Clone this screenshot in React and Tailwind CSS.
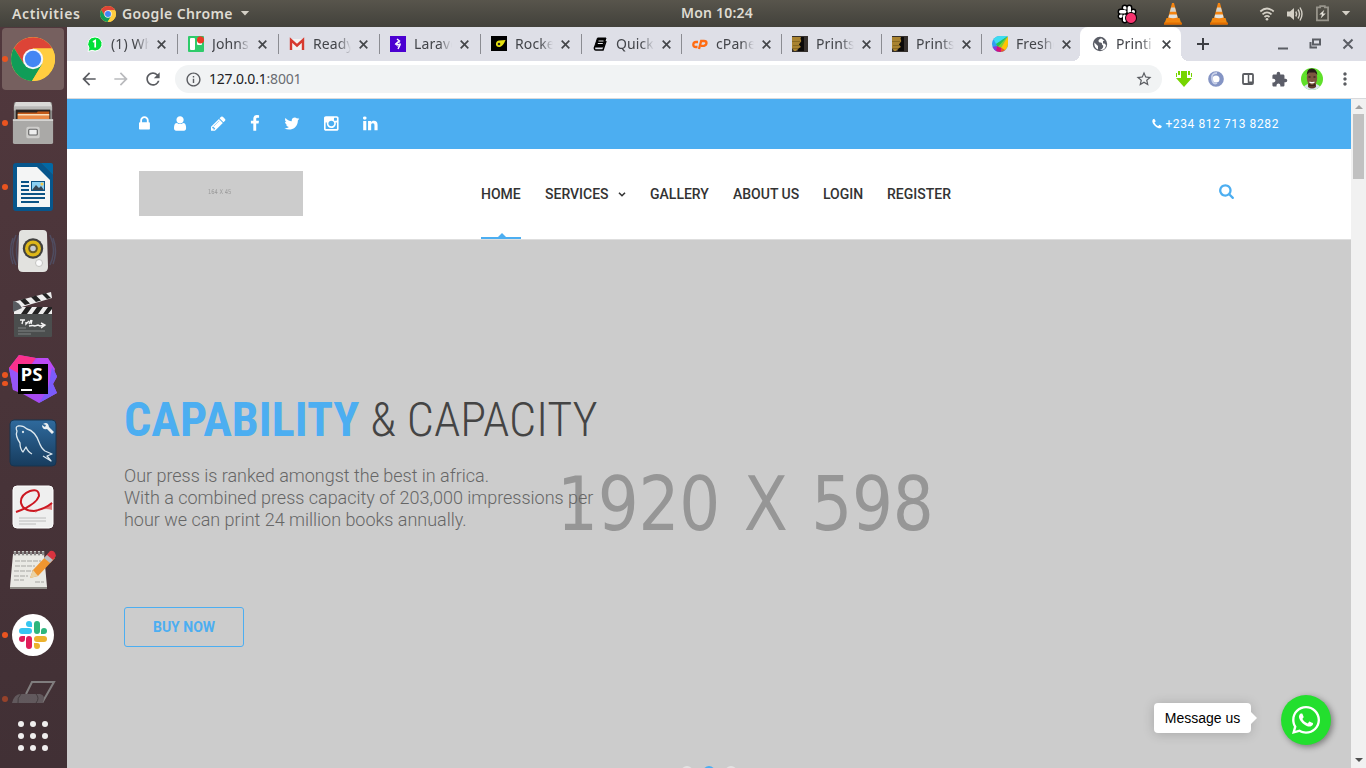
import React from "react";
import { FaWhatsapp } from "react-icons/fa";
import { MdArrowBack, MdArrowForward, MdRefresh, MdInfoOutline, MdStarBorder, MdExtension, MdMoreVert } from "react-icons/md";

const FA = {
  lock: ["0 0 1152 1792", "M320 768h512v-192q0-106-75-181t-181-75-181 75-75 181v192zM1152 864v576q0 40-28 68t-68 28h-960q-40 0-68-28t-28-68v-576q0-40 28-68t68-28h32v-192q0-184 132-316t316-132 316 132 132 316v192h32q40 0 68 28t28 68z"],
  user: ["0 0 1280 1792", "M1280 1399q0 109-62.500 187t-150.500 78h-854q-88 0-150.500-78t-62.500-187q0-85 8.500-160.500t31.500-152 58.500-131 94-89 134.500-34.500q131 128 313 128t313-128q76 0 134.500 34.500t94 89 58.500 131 31.500 152 8.500 160.500zM1024 512q0 159-112.500 271.500t-271.500 112.500-271.500-112.500-112.500-271.500 112.500-271.500 271.500-112.500 271.500 112.500 112.500 271.500z"],
  pencil: ["0 0 1536 1792", "M363 1536l91-91-235-235-91 91v107h128v128h107zM886 608q0-22-22-22-10 0-17 7l-542 542q-7 7-7 17 0 22 22 22 10 0 17-7l542-542q7-7 7-17zM832 416l416 416-832 832h-416v-416zM1515 512q0 53-37 90l-166 166-416-416 166-165q36-38 90-38 53 0 91 38l235 234q37 39 37 91z"],
  facebook: ["384 0 1024 1792", "M1343 12v264h-157q-86 0-116 36t-30 108v189h293l-39 296h-254v759h-306v-759h-255v-296h255v-218q0-186 104-288.5t277-102.5q147 0 228 12z"],
  twitter: ["64 0 1664 1792", "M1684 408q-67 98-162 167 1 14 1 42 0 130-38 259.5t-115.5 248.5-184.5 210.5-258 146-323 54.5q-271 0-496-145 35 4 78 4 225 0 401-138-105-2-188-64.5t-114-159.5q33 5 61 5 43 0 85-11-112-23-185.5-111.5t-73.5-205.5v-4q68 38 146 41-66-44-105-115t-39-154q0-88 44-163 121 149 294.5 238.5t371.5 99.5q-8-38-8-74 0-134 94.5-228.5t228.5-94.5q140 0 236 102 109-21 205-78-37 115-142 178 93-10 186-50z"],
  instagram: ["128 0 1536 1792", "M1490 1426v-648h-135q20 63 20 131 0 126-64 232.5t-174 168.5-240 62q-197 0-337-135.5t-140-327.5q0-68 20-131h-141v648q0 26 17.5 43.5t43.5 17.5h1069q25 0 43-17.5t18-43.5zm-284-533q0-124-90.5-211.5t-218.5-87.5q-127 0-217.5 87.5t-90.5 211.5 90.5 211.5 217.5 87.5q128 0 218.5-87.5t90.5-211.5zm284-360v-165q0-28-20-48.5t-49-20.5h-174q-29 0-49 20.5t-20 48.5v165q0 29 20 49t49 20h174q29 0 49-20t20-49zm174-208v1142q0 81-58 139t-139 58h-1142q-81 0-139-58t-58-139v-1142q0-81 58-139t139-58h1142q81 0 139 58t58 139z"],
  linkedin: ["128 0 1536 1792", "M477 625v991h-330v-991h330zm21-306q1 73-50.5 122t-135.5 49h-2q-82 0-132-49t-50-122q0-74 51.5-122.5t134.5-48.5 133 48.5 51 122.5zm1166 729v568h-329v-530q0-105-40.5-164.5t-126.5-59.5q-63 0-105.5 34.5t-63.5 85.5q-11 30-11 81v553h-329q2-399 2-647t-1-296l-1-48h329v144h-2q20-32 41-56t56.5-52 87-43.5 114.5-15.5q171 0 275 113.5t104 332.5z"],
  search: ["64 0 1664 1792", "M1216 832q0-185-131.5-316.5t-316.5-131.5-316.5 131.5-131.5 316.5 131.5 316.5 316.5 131.5 316.5-131.5 131.5-316.5zm512 832q0 52-38 90t-90 38q-54 0-90-38l-343-342q-179 124-399 124-143 0-273.5-55.5t-225-150-150-225-55.5-273.5 55.5-273.5 150-225 225-150 273.5-55.5 273.5 55.5 225 150 150 225 55.5 273.5q0 220-124 399l343 343q37 37 37 90z"],
  phone: ["192 0 1408 1792", "M1600 1240q0 27-10 70.5t-21 68.5q-21 50-122 106-94 51-186 51-27 0-52.5-3.5t-57.5-12.5-47.5-14.5-55.5-20.5-49-18q-98-35-175-83-128-79-264.5-215.5t-215.5-264.5q-48-77-83-175-3-9-18-49t-20.5-55.5-14.5-47.5-12.5-57.5-3.5-52.5q0-92 51-186 56-101 106-122 25-11 68.5-21t70.5-10q14 0 21 3 18 6 53 76 11 19 30 54t35 63.5 31 53.5q3 4 17.5 25t21.5 35.5 7 28.5q0 20-28.5 50t-62 55-62 53-28.5 46q0 9 5 22.5t8.5 20.5 14 24 11.5 19q76 137 174 235t235 174q2 1 19 11.5t24 14 20.5 8.5 22.5 5q18 0 46-28.5t53-62 55-62 50-28.5q14 0 28.5 7t35.5 21.5 25 17.5q25 15 53.5 31t63.5 35 54 30q70 35 76 53 3 7 3 21z"],
};

function Fa({ name, className }) {
  const [box, d] = FA[name];
  return (
    <svg viewBox={box} fill="currentColor" overflow="visible" className={className}>
      <path d={d} />
    </svg>
  );
}

function Chrome({ className }) {
  return (
    <svg viewBox="0 0 44 44" className={className}>
      <circle cx="22" cy="22" r="22" fill="#ffcd40" />
      <path d="M3 11A22 22 0 0 1 41.2 11.5H22L13 27Z" fill="#dd4437" />
      <path d="M3 11A22 22 0 0 0 21 44L31 27.5 13 27Z" fill="#109d58" />
      <path d="M31 27.5 21 44a22 22 0 0 0 20.3-32.4H22Z" fill="#ffcd40" />
      <circle cx="22" cy="22" r="10.2" fill="#f4f6fb" />
      <circle cx="22" cy="22" r="8.2" fill="#4486f4" />
    </svg>
  );
}

function Cone() {
  return (
    <svg viewBox="0 0 20 22" className="h-[22px] w-5">
      <path d="M3.5 15h13l2 6.5H1z" fill="#f08a10" />
      <path d="M1 19.5h18v2H1z" fill="#e06c00" />
      <path d="M9 0h2l4.5 17q-5.500 2.500-11 0z" fill="#f58410" />
      <path d="M8.100 4.500h3.800l1.200 4.200H6.900z" fill="#d4d4ce" />
      <path d="M6.200 11.500h7.600l.8 3q-4.600 1.600-9.200 0z" fill="#e2e2de" />
    </svg>
  );
}

function SlackMark({ className, mono }) {
  const c = mono ? ["#fff", "#fff", "#fff", "#fff"] : ["#36c5f0", "#2eb67d", "#ecb22e", "#e01e5a"];
  return (
    <svg viewBox="0 0 28 28" overflow="visible" className={className}>
      {mono && (
        <g fill="#000" stroke="#000" strokeWidth="5">
          <rect x="0" y="7" width="13" height="6" rx="3" /><path d="M13 6h-3a3 3 0 1 1 3-3z" /><rect x="15" y="0" width="6" height="13" rx="3" /><path d="M22 13v-3a3 3 0 1 1 3 3z" />
          <rect x="15" y="15" width="13" height="6" rx="3" /><rect x="7" y="15" width="6" height="13" rx="3" /><path d="M6 15v3a3 3 0 1 1-3-3z" />
        </g>
      )}
      <g fill={c[0]}><rect x="0" y="7" width="13" height="6" rx="3" /><path d="M13 6h-3a3 3 0 1 1 3-3z" /></g>
      <g fill={c[1]}><rect x="15" y="0" width="6" height="13" rx="3" /><path d="M22 13v-3a3 3 0 1 1 3 3z" /></g>
      <g fill={c[2]}><rect x="15" y="15" width="13" height="6" rx="3" /><path d="M15 22h3a3 3 0 1 1-3 3z" /></g>
      <g fill={c[3]}><rect x="7" y="15" width="6" height="13" rx="3" /><path d="M6 15v3a3 3 0 1 1-3-3z" /></g>
    </svg>
  );
}

function TopBar() {
  return (
    <header className="grid h-[27px] shrink-0 grid-cols-[1fr_auto_1fr] items-center bg-linear-to-b from-[#58554c] to-[#42413b] font-['Noto_Sans',sans-serif] text-[14px] font-semibold text-[#dfdbd2]">
      <div className="flex h-full items-center">
        <span className="ml-3 w-[88px] whitespace-nowrap tracking-[0.600px]">Activities</span>
        <Chrome className="mr-1.5 size-4" />
        <span className="w-[114px] whitespace-nowrap tracking-[0.380px]">Google Chrome</span>
        <svg viewBox="0 0 10 6" className="ml-1 h-[5px] w-[10px]"><path d="M0 0h10L5 5.500z" fill="#d4d0c6" /></svg>
      </div>
      <span className="translate-x-[34px] -translate-y-px whitespace-nowrap tracking-[0.200px]">Mon 10:24</span>
      <div className="flex h-full items-center justify-end">
        <div className="relative mr-[26px] flex size-5 items-center justify-center">
          <SlackMark mono className="size-[16px]" />
          <i className="absolute right-0 bottom-0 size-3 rounded-full border border-black bg-[#f8336f]" />
        </div>
        <Cone />
        <span className="w-[26px]" />
        <Cone />
        <svg viewBox="0 0 16 16" className="ml-[30px] size-4" fill="none" stroke="#d4d0c6" strokeWidth="1.700">
          <path d="M1.300 5.500q6.700-6 13.400 0" /><path d="M3.500 8.300q4.500-4 9 0" /><path d="M5.500 11q2.500-2.300 5 0" /><circle cx="8" cy="13.300" r="1.300" fill="#d4d0c6" stroke="none" />
        </svg>
        <svg viewBox="0 0 16 16" className="ml-3 size-4" fill="none" stroke="#d4d0c6" strokeWidth="1.400">
          <path d="M0 5.500h3L7 2v12l-4-3.500H0z" fill="#d4d0c6" stroke="none" /><path d="M8.800 5.500q1.600 2.500 0 5" /><path d="M11 3.500q3 4.500 0 9" /><path d="M13 1.500q4 6.500 0 13" />
        </svg>
        <svg viewBox="0 0 14 18" className="ml-[13px] h-[17px] w-[13px]" fill="none" stroke="#98958c" strokeWidth="1.900">
          <path d="M4.500 2.500V1h5v1.500H13v14H1v-14z" /><path d="M9 5 3.500 10h3l-1.500 4.500 5.500-5.500h-3z" fill="#e3e0d8" stroke="none" />
        </svg>
        <svg viewBox="0 0 10 6" className="mr-[15px] ml-[12px] h-[5px] w-[10px]"><path d="M0 0h10L5 5.500z" fill="#d4d0c6" /></svg>
      </div>
    </header>
  );
}

const Files = () => (
  <svg viewBox="0 0 44 46" className="size-11">
    <rect x="2" y="1" width="40" height="43" rx="2" fill="#8d8c8a" />
    <path d="M4 1h36l2 5H2z" fill="#dad9d7" /><path d="M2 6h40v4H2z" fill="#b9b8b6" />
    <rect x="4" y="9" width="36" height="10" fill="#2c2522" />
    <path d="M6 12h20l1-1h12v8H6z" fill="#c45a18" /><path d="M6 13.500h33v2H6z" fill="#fbe0bd" /><path d="M6 15.500h33V19H6z" fill="#ec8a45" />
    <path d="M1 19h42v24q0 2-2 2H3q-2 0-2-2z" fill="#aaa9a7" /><path d="M1 19h42v2H1z" fill="#d4d3d1" />
    <rect x="15" y="27" width="14" height="12" rx="2" fill="#cfcecc" /><rect x="17.500" y="29.500" width="9" height="6" rx="1" fill="#eee" stroke="#666" strokeWidth="1.200" />
  </svg>
);

const Writer = () => (
  <svg viewBox="0 0 40 48" className="h-12 w-10">
    <path d="M3 0h25l12 12v33q0 3-3 3H3q-3 0-3-3V3q0-3 3-3z" fill="#07568c" />
    <path d="M28 0h10q2 0 2 2v10z" fill="#0368a4" />
    <path d="M4 4h20l13 13v27H4z" fill="#f4f5f5" />
    <g fill="#0b5385"><path d="M8 18h8v2H8zM8 22h8v2H8zM8 26h8v2H8zM8 30h24v2H8zM8 34h24v2H8zM8 38h18v2H8z" /></g>
    <rect x="18.500" y="18.500" width="13" height="9" fill="#8bd0f2" stroke="#0b5385" />
    <path d="m19 27 4-5 3 3 2-2 3 4z" fill="#384754" /><circle cx="29" cy="21" r="1.500" fill="#f2c84b" />
  </svg>
);

const Speaker = () => (
  <svg viewBox="0 0 48 44" className="h-11 w-12">
    <g fill="none" stroke="#54688f" strokeWidth="1.500" opacity=".45"><path d="M7 6q-7 15 0 30M4 9q-5 13 0 26M41 6q7 15 0 30M44 9q5 13 0 26M10 6q-5 15 0 30" /></g>
    <path d="M14 1h20q4 0 4 4l1 33q0 5-5 5H14q-5 0-5-5l1-33q0-4 4-4z" fill="#e2e2df" />
    <circle cx="24" cy="19.500" r="10.200" fill="#41413f" /><circle cx="24" cy="19.500" r="8" fill="#ddb719" /><circle cx="24" cy="19.500" r="4.800" fill="#65592a" /><circle cx="24" cy="19.500" r="2.800" fill="#c7ccd1" />
    <circle cx="30" cy="34" r="3.500" fill="#fafafa" stroke="#c3c3c0" />
  </svg>
);

const Clapper = () => (
  <svg viewBox="0 0 40 46" className="h-[46px] w-10">
    <path d="M0 10 38 0l1 6L2 17z" fill="#ededed" />
    <path d="m7 8 5 5 5-1.500-5-5zM18 5l5 5 5-1.500-5-5zM29 2l5 5 4-1-5-5z" fill="#222" />
    <rect x="1" y="15" width="38" height="7" fill="#ededed" />
    <path d="m8 22 5-7h6l-5 7zM19 22l5-7h6l-5 7zM30 22l5-7h4v2l-4 5z" fill="#222" />
    <path d="M0 9v11l9-4q-3-6-9-7z" fill="#585b60" />
    <rect x="1" y="22" width="38" height="23" rx="1" fill="#4b4e4e" />
    <path d="M7 28h5M10 28l-1 4M13 30v2l3-3M16 32l2-4M19 28l-1 4M16 34q4-1 6 0l3-1 2 1 5-1M28 31l4 2-4 3" stroke="#f2f2f2" strokeWidth="1.400" fill="none" />
    <path d="M5 36h8M5 39h27M5 42h13" stroke="#8e9292" strokeWidth=".8" />
  </svg>
);

const PhpStorm = () => (
  <svg viewBox="0 0 48 48" className="size-12">
    <path d="m0 13 10-13 17 3 11 0 6 9 4 10-4 7 4 9-18 10-16-9-10-4z" fill="#a84af2" />
    <path d="m0 13 10-13 17 3-5 7H9v15z" fill="#fb318c" /><path d="m0 13 9 5v17H4z" fill="#9655f7" /><path d="m22 10 7-7h10l7 11-7 20z" fill="#bb4af4" /><path d="m39 34 4-22 5 9-4 8 4 9-18 10z" fill="#7a5cf9" />
    <rect x="9" y="9" width="30" height="30" /><rect x="12" y="34" width="11" height="2" fill="#fff" />
    <text x="11.500" y="26" fill="#fff" fontFamily="Open Sans, sans-serif" fontSize="18" fontWeight="700" textLength="22" lengthAdjust="spacingAndGlyphs">PS</text>
  </svg>
);

const Workbench = () => (
  <svg viewBox="0 0 48 48" className="size-12">
    <defs><linearGradient id="wb" x2="0" y2="1"><stop stopColor="#2f6a9d" /><stop offset="1" stopColor="#173c5e" /></linearGradient></defs>
    <rect x="1" y="1" width="46" height="46" rx="4" fill="url(#wb)" stroke="#18344f" />
    <g fill="none" stroke="#dbe7ee" strokeWidth="1.300" strokeLinejoin="round"><path d="M23 35q-4-2-6-7l-3 5q-3-3-3-9Q6 17 8 12q-2-4 1-5 5-1 9 3 8 2 12 13 2 6 6 9l7 3-5 2 4 5-8-5" /><circle cx="14" cy="13" r=".5" /></g>
    <path d="M34 5q5-3 6 3l5 5-2 2-5-5q-5 1-5-4l3 2 1-2z" fill="#e9eff2" />
  </svg>
);

const Reader = () => (
  <svg viewBox="0 0 42 44" className="h-11 w-[42px]">
    <rect x="1" y="1" width="40" height="42" rx="4" fill="#efefef" stroke="#fff" />
    <path d="M24 26q9-2 16-9v8q-9-3-17 3z" fill="#e47a7a" />
    <path d="M4 27Q24 20 27 11 27 3 18 6 8 10 9 18q2 8 13 8 11-2 18-8" fill="none" stroke="#cc1821" strokeWidth="2" />
    <path d="M7 33h27M7 36h27M7 39h17" stroke="#bcbcbc" />
  </svg>
);

const Notes = () => (
  <svg viewBox="0 0 46 40" className="mb-0.5 h-10 w-[46px]">
    <path d="M3 4h31l3 33H0z" fill="#e9e9e4" /><path d="M0 37h37v2H0z" fill="#8f8d87" />
    <path d="M5 6V1M9 6V1M13 6V1M17 6V1M21 6V1M25 6V1M29 6V1M33 6V1" stroke="#c9c8c4" strokeWidth="2.400" /><path d="M5 5V2M9 5V2M13 5V2M17 5V2M21 5V2M25 5V2M29 5V2M33 5V2" stroke="#4c4a4d" />
    <path d="M5 11h26M5 16h20M4 21h27M4 26h14M4 30h10M25 32h9" stroke="#a5a5a1" strokeDasharray="5 1" />
    <path d="m20 28 3-8L39 3l6 5-17 18z" fill="#ef9630" /><path d="m20 28 3-8 5 6z" fill="#e9d2a4" /><path d="m35 7 5-6q5-1 6 5l-5 6z" fill="#d8333f" /><path d="m34 8 3-3 6 5-3 3z" fill="#b9bcc0" />
  </svg>
);

const Cutter = () => (
  <svg viewBox="0 0 44 23" className="h-[23px] w-11 opacity-60">
    <path d="m14 14 6-12h22L30 23" fill="none" stroke="#aab0ae" strokeWidth="2" />
    <path d="M0 23q2-9 9-9h19q6 1 3 9z" fill="#777477" /><path d="M9 14q-4 4-3 9M24 14q4 4 0 9" stroke="#444" fill="none" />
  </svg>
);

const dock = [
  { el: <Files />, dots: 1 }, { el: <Writer />, dots: 1 }, { el: <Speaker />, dots: 0 }, { el: <Clapper />, dots: 0 },
  { el: <PhpStorm />, dots: 2 }, { el: <Workbench />, dots: 0 }, { el: <Reader />, dots: 0 }, { el: <Notes />, dots: 0 },
  { el: <div className="flex size-[42px] items-center justify-center rounded-full bg-white"><SlackMark className="size-7" /></div>, dots: 1 },
];

function Dots({ n }) {
  return (
    <div className="flex w-[9px] shrink-0 flex-col gap-[3px] pl-0.5">
      {Array.from({ length: n }, (_, i) => <i key={i} className="size-[5.500px] rounded-full bg-[#e95420]" />)}
    </div>
  );
}

function Dock() {
  return (
    <aside className="flex w-[67px] shrink-0 flex-col bg-linear-to-b from-[#51383d] to-[#413035]">
      <div className="flex h-16 items-center">
        <div className="ml-0.5 flex h-[62px] w-[62px] items-center rounded bg-[#76605f]">
          <div className="-ml-0.5 mr-0.5"><Dots n={1} /></div>
          <Chrome className="size-11" />
        </div>
      </div>
      {dock.map((d, i) => (
        <div key={i} className="flex h-16 shrink-0 items-center">
          <Dots n={d.dots} />
          <div className="flex w-12 justify-center">{d.el}</div>
        </div>
      ))}
      <div className="flex h-9 items-center pt-3"><div className="translate-y-2 opacity-50"><Dots n={1} /></div><span className="w-[3px]" /><Cutter /></div>
      <div className="grid grid-cols-3 gap-1.5 self-start pt-[18px] pl-[18px]">
        {Array.from({ length: 9 }, (_, i) => <i key={i} className="size-1.5 rounded-full bg-[#f0eeee]" />)}
      </div>
    </aside>
  );
}

const PrintFav = () => (
  <svg viewBox="0 0 16 16" className="size-4"><path d="M0 0h16v16H0z" fill="#35302d" /><path d="M7 1h5v14H6z" fill="#0c0a09" /><path d="M0 1h9q-1 2 0 3t-1 3 0 3-1 2l-3 3H2L0 12z" fill="#a98330" /><path d="M0 5.500h8M1 9.500h7M1 12.500h5" stroke="#80621f" strokeWidth=".8" /></svg>
);

const tabs = [
  ["(1) Wh", <svg viewBox="0 0 16 16" className="size-4"><path d="M8 1a7 7 0 1 1-3 13.300L1 15.500 2 12A7 7 0 0 1 8 1z" fill="#00e038" stroke="#fff" /><path d="M6 6l2.200-1.500V11.500" fill="none" stroke="#fff" strokeWidth="1.700" /></svg>],
  ["Johns", <svg viewBox="0 0 16 16" className="size-4"><rect width="16" height="16" rx="1" fill="#2ecb6a" /><rect x="2" y="2" width="5" height="12" rx="1" fill="#fff" /><rect x="9" y="2" width="5" height="7" rx="1" fill="#fff" /><circle cx="12.500" cy="3.800" r="3.600" fill="#eb3a25" /></svg>],
  ["Ready", <svg viewBox="0 0 16 16" className="size-4"><path d="M1 3h14v11H1z" fill="#f2f2f2" /><path d="M2 14V4l6 5.500L14 4v10" fill="none" stroke="#d73a2f" strokeWidth="2.400" /></svg>],
  ["Larave", <svg viewBox="0 0 16 16" className="size-4"><path d="M0 0h16v16H0z" fill="#4b00d1" /><path d="M7 3l2.500 2L6 8l4 1-2 4" fill="none" stroke="#fff" strokeWidth="1.400" /><path d="M8 5.500 10.500 8 8 10.500 5.500 8z" fill="none" stroke="#fff" /></svg>],
  ["Rocke", <svg viewBox="0 0 16 16" className="size-4"><path d="M0 0h16v15H0z" /><path d="M14.500 4 8 4.500Q4.500 5 5 9q.5 2.500 4 2 3.500-1.500 5.500-7z" fill="#e5e010" /><circle cx="8" cy="8" r="1.300" fill="#222" /></svg>],
  ["Quick", <svg viewBox="0 0 16 16" className="size-4"><path d="M5.500 2H14l-3 9H2.500z" stroke="#000" fill="#000" strokeLinejoin="round" /><path d="M2.500 11q-.5 3 1.500 3h7l3-9" stroke="#000" fill="none" strokeWidth="1.500" /><path d="M6.500 5h5M5.800 7.500h5" stroke="#fff" fill="none" strokeWidth=".9" /></svg>],
  ["cPane", <svg viewBox="0 0 16 16" className="size-4"><path d="M6 6H4Q1.500 6 1.300 8.500T4 11h1.500M7 13l2.200-8H12q2.500 0 2.500 2T12 9.800H9" fill="none" stroke="#ff6c12" strokeWidth="2.300" /></svg>],
  ["Prints", <PrintFav />],
  ["Prints", <PrintFav />],
  ["Freshd", (
    <svg viewBox="0 0 16 16" className="size-4"><defs><clipPath id="fw"><path d="M8 0h6.500Q16 0 16 1.500V8a8 8 0 1 1-8-8z" /></clipPath></defs>
      <g clipPath="url(#fw)"><path d="M0 0h16v16H0z" fill="#2f9ff0" /><path d="M0 0h16L4 8z" fill="#3edcf0" /><path d="M16 0 4 8l2 3z" fill="#28c74a" /><path d="M16 0 6 11l3 1z" fill="#8ad420" /><path d="M16 0v16l-7-4z" fill="#ffc400" /><path d="M8 11l8 5H8z" fill="#f0562a" /><path d="M5 10l4 2v4H3z" fill="#d8107a" /><path d="M0 11l5-1-1 6H0z" fill="#8a3ad8" /></g></svg>
  )],
  ["Printi", (
    <svg viewBox="0 0 16 16" className="size-4"><circle cx="8" cy="8" r="7.200" fill="#5a5d66" /><path d="M9.500 2.500Q6.500 3 6.500 5q0 1.500 2 1.500T10 8.500q2 1 1 3-1 1.800-3 2.500 5.500.5 6-5l-1.500-1.500H11V5h1.500zM2.300 6.500 6 10v3.500Q2 12 2.300 6.500z" fill="#fff" /></svg>
  )],
];

const tabSize = (i) => (i === 10 ? "-ml-0.5 w-[101px] rounded-t-lg bg-white pl-3" : i < 5 ? "w-[101px] pl-2.5" : "w-[100px] pl-2.5");

function Tab({ title, icon, index }) {
  const active = index === 10;
  return (
    <div className={"relative flex h-[34px] shrink-0 items-center " + tabSize(index)}>
      <span className="flex w-4 justify-center">{icon}</span>
      <span className="ml-2 w-[38px] -translate-y-px overflow-hidden whitespace-nowrap mask-[linear-gradient(90deg,#000_66%,transparent_100%)] font-['Noto_Sans',sans-serif] text-[14px] tracking-[0.100px] text-[#43454a]">{title}</span>
      <svg viewBox="0 0 9 9" className="ml-[7.500px] size-[9px]" stroke="#45474b" strokeWidth="1.700"><path d="m.7.7 7.600 7.600M8.300.7.7 8.300" /></svg>
      {index < 9 && <i className="absolute right-0 h-5 w-px bg-[#8b8c92]" />}
      {active && (
        <>
          <i className="absolute bottom-0 -left-2 size-2 bg-[radial-gradient(circle_at_0_0,transparent_8px,white_8px)]" />
          <i className="absolute -right-2 bottom-0 size-2 bg-[radial-gradient(circle_at_100%_0,transparent_8px,white_8px)]" />
        </>
      )}
    </div>
  );
}

function BrowserChrome() {
  return (
    <>
      <div className="flex h-[34px] items-center bg-[#dedfe7] pl-2.5">
        {tabs.map(([t, ic], i) => <Tab key={i} title={t} icon={ic} index={i} />)}
        <svg viewBox="0 0 12 12" className="ml-[16px] size-3" stroke="#3c3e43" strokeWidth="2"><path d="M6 0v12M0 6h12" /></svg>
        <svg viewBox="0 0 80 12" className="ml-auto mr-[12px] h-3 w-20 shrink-0" fill="none" stroke="#5b5e65" strokeWidth="2">
          <path d="M4 10.500h10M39 1.500h7v5h-7zM36.500 4v5.500H43M69.500 1.500l9 9M78.500 1.500l-9 9" />
        </svg>
      </div>
      <div className="flex h-[38px] items-center border-b border-[#d8d9dc] bg-white pl-3">
        <MdArrowBack className="size-[20px] -translate-y-px text-[#5a5c61]" />
        <MdArrowForward className="ml-3 size-[20px] -translate-y-px text-[#b9babd]" />
        <MdRefresh className="ml-3 size-[20px] -translate-y-px text-[#5a5c61]" />
        <div className="mb-px ml-3 flex h-7 w-[987px] items-center rounded-full bg-[#f1f3f4] pl-2.5 pr-[9px]">
          <MdInfoOutline className="size-[17px] text-[#5a5c61]" />
          <span className="ml-[7px] -translate-y-px font-['Noto_Sans',sans-serif] text-[14px] tracking-[-0.200px] text-[#202124]">127.0.0.1<span className="text-[#6a6d72]">:8001</span></span>
          <MdStarBorder className="ml-auto size-[18px] text-[#5a5c61]" />
        </div>
        <svg viewBox="0 0 16 16" className="mb-px ml-[14px] size-4"><path d="M2 0h2v4H2zM5 0h6v7h5l-8 9-8-9h5zM12 0h2v4h-2zM0 2h1v4H0zM15 2h1v4h-1z" fill="#76d500" /></svg>
        <svg viewBox="0 0 16 16" className="mb-px ml-4 size-4"><circle cx="8" cy="8" r="5.700" fill="none" stroke="#8494c4" strokeWidth="4.300" /><path d="M9 2Q3 2 4 8t5 4" fill="none" stroke="#c8d0e8" strokeWidth="1.800" /></svg>
        <svg viewBox="0 0 12 12" className="mb-px ml-[18px] size-3"><rect x="1" y="1" width="10" height="10" rx="1" fill="none" stroke="#5a5c61" strokeWidth="1.800" /><path d="M6.500 1v10" stroke="#5a5c61" strokeWidth="1.500" /><path d="M7 8.500h4V11H7z" fill="#5a5c61" /></svg>
        <MdExtension className="mb-px ml-[17px] size-[17px] text-[#5b5d68]" />
        <svg viewBox="0 0 22 22" className="mb-px ml-[13px] size-[22px]"><defs><clipPath id="av"><circle cx="11" cy="11" r="11" /></clipPath></defs>
          <g clipPath="url(#av)"><path d="M0 0h22v22H0z" fill="#5fe02a" /><path d="M1 22q2-5 6-6h8q4 1 6 6z" fill="#dbe3f0" /><path d="M7 13h8v6q-4 3-8 0z" fill="#5c3b2b" /><ellipse cx="11" cy="10" rx="5.200" ry="8" fill="#7d5540" /><path d="M5.700 7Q6 0 11 .5T16.300 7L14 4.500H8z" fill="#261b18" /><path d="M7.500 9h2M12.500 9h2" stroke="#1a1210" strokeWidth="1.200" /><path d="M8 15q3 4 6 0v3H8z" fill="#3a251d" /><path d="M8.500 14q2.500 1.500 5 0" stroke="#fff" strokeWidth="1.300" fill="none" /></g></svg>
        <MdMoreVert className="mb-px ml-[11.500px] size-5 text-[#5a5c61]" />
      </div>
    </>
  );
}

const socials = [
  ["lock", "w-[10.900px]"], ["user", "w-[12.100px]"], ["pencil", "w-[14.600px]"], ["facebook", "w-[9.700px]"],
  ["twitter", "w-[15.800px]"], ["instagram", "w-[14.600px]"], ["linkedin", "w-[14.600px]"],
];

function Page() {
  return (
    <div className="flex min-h-0 flex-1 font-['Roboto',sans-serif]">
      <main className="flex w-[1284px] shrink-0 flex-col">
        <div className="flex h-[50px] shrink-0 items-center justify-between bg-[#4caef1] pr-[72px] pl-[72px] text-white">
          <div className="mb-0.5 flex gap-[24.400px]">
            {socials.map(([n, c]) => <Fa key={n} name={n} className={"h-[17px] shrink-0 " + c} />)}
          </div>
          <div className="flex items-center gap-[3px]">
            <Fa name="phone" className="h-3 w-[10px]" />
            <span className="text-[12px] tracking-[0.600px] whitespace-nowrap">+234 812 713 8282</span>
          </div>
        </div>
        <div className="flex h-[91px] shrink-0 border-b border-[#dedede] bg-white pl-[72px]">
          <div className="mt-[22px] flex h-[45px] w-[164px] shrink-0 justify-center bg-[#ccc] pt-[17px] pr-0.5 font-['DejaVu_Sans',sans-serif] text-[6.500px] leading-[8px] text-[#999]"><span className="scale-x-[0.800]">164 X 45</span></div>
          <nav className="ml-[178px] flex text-[14px] leading-[90px] font-medium whitespace-nowrap text-[#333]">
            <div className="relative w-16">HOME
              <svg viewBox="0 0 40 6" className="absolute bottom-0 left-0 h-1.5 w-10" fill="#4caef1"><path d="M0 4h17l4-4 4 4h15v2H0z" /></svg>
            </div>
            <div className="flex w-[105px] items-center">SERVICES
              <svg viewBox="0 0 8 5" className="ml-[9px] h-[5px] w-2" fill="none" stroke="#333" strokeWidth="1.600"><path d="m1 .7 3 3 3-3" /></svg>
            </div>
            <div className="w-[83px]">GALLERY</div><div className="w-[90px]">ABOUT US</div><div className="w-16">LOGIN</div><div className="w-[64px]">REGISTER</div>
          </nav>
          <Fa name="search" className="mt-[34px] ml-[268px] h-4 w-[15px] text-[#4caef1]" />
        </div>
        <section className="relative flex min-h-0 flex-1 flex-col items-start overflow-hidden bg-[#ccc] pl-[57px]">
          <span className="absolute top-[214px] left-[489.500px] origin-left scale-x-[0.871] font-['DejaVu_Sans',sans-serif] text-[74px] leading-[100px] tracking-[-0.300px] whitespace-nowrap text-[#969696] [word-spacing:4px]">1920 X 598</span>
          <h1 className="relative mt-[152px] font-['Roboto_Condensed',Roboto,sans-serif] text-[48px] leading-[56px] font-light whitespace-nowrap text-[#444]"><b className="font-bold text-[#4caef1]">CAPABILITY</b> &amp; CAPACITY</h1>
          <p className="relative mt-[17px] text-[18px] leading-[22px] font-light tracking-[-0.015px] whitespace-nowrap text-[#666]">Our press is ranked amongst the best in africa.<br />With a combined press capacity of 203,000 impressions per<br />hour we can print 24 million books annually.</p>
          <button className="mt-[76px] h-10 w-[120px] rounded-[3px] border border-[#4caef1] text-[14px] font-bold whitespace-nowrap text-[#4caef1]">BUY NOW</button>
          <div className="absolute top-[526px] left-[614px] flex gap-2.5"><i className="size-3 rounded-full bg-[#e2e2e2]" /><i className="size-3 rounded-full bg-[#4caef1]" /><i className="size-3 rounded-full bg-[#e2e2e2]" /></div>
          <div className="absolute right-5 bottom-[23px] flex items-center">
            <div className="relative mr-[30px] mb-1 flex h-[30px] w-[97px] items-center justify-center rounded bg-white font-['Liberation_Sans',sans-serif] text-[14px] text-black shadow-[0_1px_12px_rgba(0,0,0,0.18)]">Message us
              <svg viewBox="0 0 6 12" className="absolute top-[9px] -right-1.5 h-3 w-1.5" fill="#fff"><path d="m0 0 6 6-6 6z" /></svg>
            </div>
            <div className="flex size-[50px] items-center justify-center rounded-full bg-[#23df2e] text-white shadow-[2px_2px_6px_rgba(0,0,0,0.4)]"><FaWhatsapp className="size-8" /></div>
          </div>
        </section>
      </main>
      <div className="flex w-[15px] flex-col items-center bg-[#f1f1f1]">
        <svg viewBox="0 0 8 4" className="mt-1.5 h-1 w-2" fill="#a0a0a0"><path d="m0 4 4-4 4 4z" /></svg>
        <i className="mt-[5px] h-[65px] w-[11px] bg-[#c1c1c1]" />
        <svg viewBox="0 0 8 4" className="mt-auto mb-1.5 h-1 w-2" fill="#505050"><path d="m0 0 4 4 4-4z" /></svg>
      </div>
    </div>
  );
}

export default function App() {
  return (
    <div className="flex h-[768px] w-[1366px] flex-col overflow-hidden">
      <TopBar />
      <div className="flex min-h-0 flex-1">
        <Dock />
        <div className="flex w-[1299px] shrink-0 flex-col">
          <BrowserChrome />
          <Page />
        </div>
      </div>
    </div>
  );
}
